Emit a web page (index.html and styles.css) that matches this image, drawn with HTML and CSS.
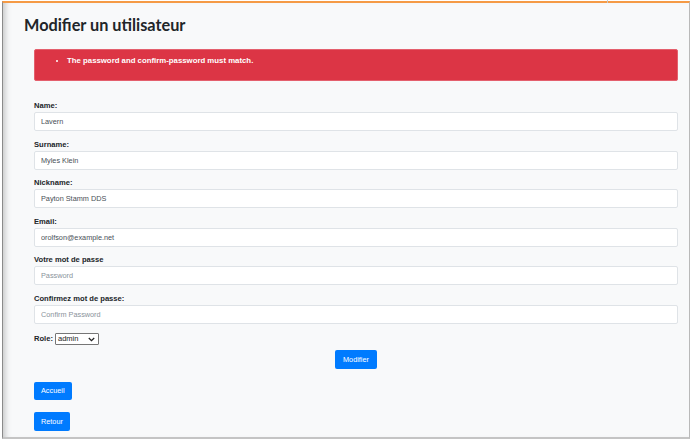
FILE: index.html
```html
<!DOCTYPE html>
<html lang="fr">
<head>
<meta charset="utf-8">
<title>Modifier un utilisateur</title>
<link rel="stylesheet" href="styles.css">
</head>
<body>
<div class="topbar"><span class="tick"></span></div>
<div class="frame">
  <h1 class="title">Modifier un utilisateur</h1>
  <div class="content">
    <div class="alert">
      <ul class="alert-list">
        <li>The password and confirm-password must match.</li>
      </ul>
    </div>
    <form class="form">
      <div class="group">
        <label class="label">Name:</label>
        <input class="input" type="text" value="Lavern">
      </div>
      <div class="group">
        <label class="label">Surname:</label>
        <input class="input" type="text" value="Myles Klein">
      </div>
      <div class="group">
        <label class="label">Nickname:</label>
        <input class="input" type="text" value="Payton Stamm DDS">
      </div>
      <div class="group">
        <label class="label">Email:</label>
        <input class="input" type="text" value="orolfson@example.net">
      </div>
      <div class="group">
        <label class="label">Votre mot de passe</label>
        <input class="input" type="password" placeholder="Password">
      </div>
      <div class="group">
        <label class="label">Confirmez mot de passe:</label>
        <input class="input" type="password" placeholder="Confirm Password">
      </div>
      <div class="role-row">
        <label class="label">Role:</label>
        <span class="select"><span class="select-text">admin</span><svg class="chev" width="7" height="5" viewBox="0 0 7 5"><path d="M0.8 1 L3.5 3.6 L6.2 1" fill="none" stroke="#222" stroke-width="1.3"/></svg></span>
      </div>
      <div class="submit-row">
        <button class="btn btn-wide" type="button">Modifier</button>
      </div>
    </form>
    <div class="nav-row first"><button class="btn btn-sm" type="button">Accueil</button></div>
    <div class="nav-row"><button class="btn" type="button">Retour</button></div>
  </div>
</div>
</body>
</html>
```

FILE: styles.css
```css
* { box-sizing: border-box; }
html, body { margin: 0; padding: 0; }
body {
  background: #ffffff;
  width: 694px;
  height: 443px;
  overflow: hidden;
  font-family: "Liberation Sans", Arial, sans-serif;
  color: #212529;
  position: relative;
}
.topbar {
  height: 1px;
  position: relative;
}
.tick {
  position: absolute;
  left: 607px;
  top: 0;
  width: 1px;
  height: 3px;
  background: #c8c8c8;
}
.frame {
  margin-left: 2px;
  width: 688px;
  height: 438px;
  background: #f8f9fa;
  border-top: 2px solid #f59a45;
  border-left: 1px solid #8a8a8a;
  border-right: 1px solid #b9b9b9;
  border-bottom: 2px solid #c4c4c4;
  box-shadow: inset 7px 0 6px -5px rgba(0, 0, 0, 0.22);
  padding-top: 10px;
}
.title {
  margin: 0 0 0 21px;
  font-family: Lato, "Noto Sans", sans-serif;
  font-weight: 700;
  font-size: 16.3px;
  line-height: 24px;
  color: #212529;
}
.content {
  margin: 12px 11px 0 31px;
}
.alert {
  background: #dc3545;
  border: 1px solid #e4606d;
  border-radius: 2px;
  height: 32px;
  padding-top: 5px;
  color: #fff;
}
.alert-list {
  margin: 0;
  padding-left: 32px;
  font-weight: bold;
  font-size: 7.8px;
  line-height: 12px;
}
.form {
  margin-top: 20px;
}
.group {
  margin-bottom: 8.6px;
}
.label {
  display: block;
  font-weight: bold;
  font-size: 7.6px;
  line-height: 10px;
  color: #212529;
  margin-bottom: 1px;
}
.input {
  display: block;
  width: 100%;
  height: 19px;
  margin: 0;
  padding: 0 6px;
  border: 1px solid #dfe3e7;
  border-radius: 2px;
  background: #fff;
  font-family: "Liberation Sans", Arial, sans-serif;
  font-size: 7.3px;
  color: #495057;
  outline: none;
}
.input::placeholder { color: #8a939b; }
.role-row {
  display: flex;
  align-items: center;
  gap: 2px;
  height: 13px;
}
.role-row .label { margin: 0; }
.select {
  display: inline-flex;
  align-items: center;
  justify-content: space-between;
  width: 44px;
  height: 12px;
  border: 1px solid #767676;
  border-radius: 1px;
  background: #fff;
  padding: 0 3px 0 2px;
  font-size: 7.5px;
  color: #222;
}
.select-text { line-height: 10px; }
.submit-row {
  display: flex;
  justify-content: center;
  margin-top: 4px;
}
.btn {
  background: #007bff;
  color: #fff;
  border: none;
  border-radius: 2px;
  height: 19px;
  padding: 0 7px;
  font-family: "Liberation Sans", Arial, sans-serif;
  font-size: 7.3px;
  line-height: 19px;
  cursor: pointer;
}
.btn-wide { padding: 0 8.5px; }
.btn-sm { height: 18px; line-height: 18px; }
.nav-row {
  display: flex;
  margin-top: 12px;
}
.nav-row.first { margin-top: 13px; }
```
